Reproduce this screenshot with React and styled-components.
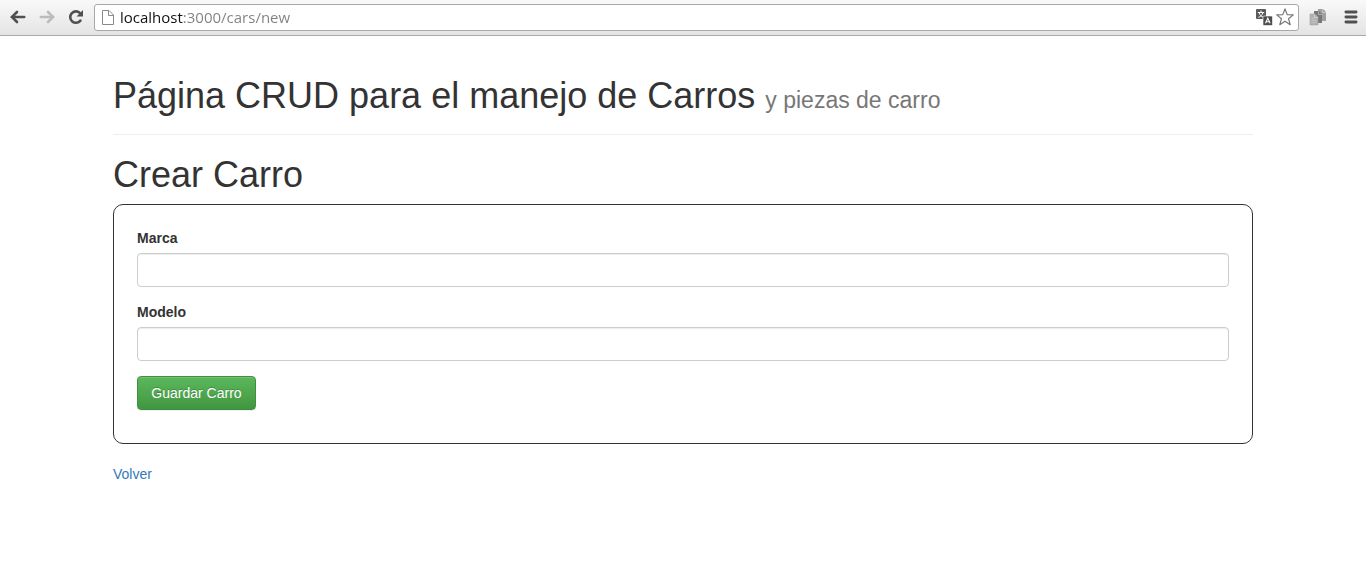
import React from "react";
import styled, { createGlobalStyle } from "styled-components";

const GlobalStyle = createGlobalStyle`
  *, *::before, *::after { box-sizing: border-box; }
  body {
    margin: 0;
    background: #fff;
    color: #333;
    font: 14px/20px "Liberation Sans", Arial, sans-serif;
  }
`;

const Toolbar = styled.header`
  display: flex;
  align-items: center;
  height: 36px;
  padding: 0 1px 1px 7px;
  background: linear-gradient(#f9f9f9, #e4e4e4);
  border-bottom: 1px solid #a9a9a9;
`;

const IconButton = styled.button`
  display: flex;
  align-items: center;
  justify-content: center;
  flex: none;
  width: ${(p) => p.$width || 29}px;
  height: 28px;
  padding: 0;
  border: 0;
  background: none;
  color: ${(p) => p.$color || "#505050"};

  svg { display: block; }
`;

const AddressBar = styled.form`
  display: flex;
  align-items: center;
  flex: 1;
  min-width: 0;
  height: 27px;
  margin-left: 7px;
  padding: 0 2px 0 7px;
  background: #fff;
  border: 1px solid #a8a8a8;
  border-radius: 3px;
  color: #888;
`;

/* The host part is dark, the path after it grey. */
const AddressInput = styled.input`
  flex: 1;
  min-width: 0;
  height: 24px;
  margin-left: 6px;
  padding: 0;
  border: 0;
  outline: 0;
  font: 15px/24px "Open Sans", "Noto Sans", sans-serif;
  color: #222;
  background: linear-gradient(to right, #111 63px, #808080 63px);
  background-clip: text;
  -webkit-text-fill-color: transparent;
`;

const Container = styled.main`
  max-width: 1170px;
  margin: 0 auto;
  padding: 0 15px;
`;

const PageHeader = styled.div`
  margin: 40px 0 20px;
  padding-bottom: 9px;
  border-bottom: 1px solid #eee;
`;

const Title = styled.h1`
  margin: 0 0 9px;
  font-size: 36px;
  font-weight: 500;
  line-height: 40px;

  small {
    font-size: 23px;
    font-weight: 400;
    line-height: 1;
    color: #777;
  }
`;

const CarForm = styled.form`
  margin-bottom: 20px;
  padding: 23px 23px 33px;
  border: 1px solid #333;
  border-radius: 10px;
`;

const Field = styled.div`
  margin-bottom: 15px;
`;

const Label = styled.label`
  display: block;
  margin-bottom: 5px;
  font-weight: 700;
`;

const TextInput = styled.input`
  display: block;
  width: 100%;
  height: 34px;
  padding: 6px 12px;
  border: 1px solid #ccc;
  border-radius: 4px;
  background: #fff;
  box-shadow: inset 0 1px 1px rgba(0, 0, 0, 0.075);
  color: #555;
  font: inherit;
`;

const SubmitButton = styled.button`
  display: block;
  min-width: 119px;
  padding: 6px 12px;
  border: 1px solid #3e8f3e;
  border-radius: 4px;
  background: linear-gradient(#5cb85c, #419641);
  box-shadow: inset 0 1px 0 rgba(255, 255, 255, 0.15), 0 1px 1px rgba(0, 0, 0, 0.075);
  color: #fff;
  font: inherit;
  text-shadow: 0 -1px 0 rgba(0, 0, 0, 0.2);
  cursor: pointer;
`;

const BackLink = styled.a`
  color: #337ab7;
  text-decoration: none;
`;

function ArrowIcon({ flip }) {
  return (
    <svg width="16" height="14" viewBox="0 0 16 14" fill="none" stroke="currentColor" strokeWidth="2.6" aria-hidden="true">
      <g transform={flip ? "translate(16 0) scale(-1 1)" : undefined}>
        <path d="M2 7H14.2" strokeLinecap="round" />
        <path d="M7 2L2 7l5 5" strokeLinecap="round" strokeLinejoin="miter" />
      </g>
    </svg>
  );
}

function ReloadIcon() {
  return (
    <svg width="16" height="16" viewBox="0 0 16 16" aria-hidden="true">
      <path d="M12.4 11.6A5.7 5.700 0 1 1 11.800 3.900" fill="none" stroke="currentColor" strokeWidth="2.600" strokeLinecap="round" />
      <path d="M15 1V7.500H8.500z" fill="currentColor" />
    </svg>
  );
}

function PageIcon() {
  return (
    <svg width="12" height="16" viewBox="0 0 12 16" fill="none" stroke="#8a8a8a" aria-hidden="true">
      <path d="M.5 1.500h6.500l4.500 4.500v9.500H.5z" fill="#fff" />
      <path d="M6.500 1.500V6.500h5" />
    </svg>
  );
}

function TranslateIcon() {
  return (
    <svg width="17" height="17" viewBox="0 0 17 17" fill="none" aria-hidden="true">
      <rect x="0" y="0" width="10" height="10" rx="1" fill="#5a5a5a" />
      <path d="M5 1.400v1.600M1.800 3.500h6.400M3.200 4c.6 2 2.200 3.600 4.400 4.400M6.800 4c-.6 2-2.200 3.600-4.400 4.400" stroke="#fff" strokeWidth="1" />
      <rect x="7" y="7" width="9.500" height="9.500" rx="1" fill="#4d4d4d" stroke="#fff" strokeWidth=".6" />
      <path d="M9.500 14.300l2.300-5.200 2.300 5.200M10.300 12.800h3" stroke="#fff" strokeWidth="1.100" />
    </svg>
  );
}

function StarIcon() {
  return (
    <svg width="18" height="18" viewBox="0 0 18 18" fill="#fff" stroke="#777" strokeWidth="1.200" strokeLinejoin="round" aria-hidden="true">
      <path d="M9 .9l2.200 5.700 6.100.3-4.800 3.800 1.700 6L9 13.300l-5.200 3.400 1.700-6L.7 6.900l6.100-.3z" />
    </svg>
  );
}

function PagesIcon() {
  return (
    <svg width="18" height="17" viewBox="0 0 18 17" aria-hidden="true">
      <path d="M9 0h5l3 3v9H9z" fill="#a0a0a0" />
      <path d="M13.500 .5v3H17" fill="none" stroke="#c8c8c8" />
      <path d="M5 2h5l3 3v9H5z" fill="#777" />
      <path d="M9.500 2.500v3H13" fill="none" stroke="#b0b0b0" />
      <path d="M1 5h5l3 3v8H1z" fill="#b2b2b2" stroke="#a2a2a2" strokeWidth=".6" />
      <path d="M2.500 9.500h3M2.500 11.500h5M2.500 13.500h5" stroke="#c2c2c2" />
      <path d="M5.500 5.500v3H9" fill="none" stroke="#cecece" />
    </svg>
  );
}

function MenuIcon() {
  return (
    <svg width="14" height="14" viewBox="0 0 14 14" stroke="currentColor" strokeWidth="2.800" strokeLinecap="round" aria-hidden="true">
      <path d="M1.900 2h10.200M1.900 7h10.200M1.900 12h10.200" />
    </svg>
  );
}

export default function App() {
  return (
    <>
      <GlobalStyle />
      <Toolbar>
        <IconButton $width={21} aria-label="Atrás"><ArrowIcon /></IconButton>
        <IconButton $width={37} $color="#bcbcbc" aria-label="Adelante"><ArrowIcon flip /></IconButton>
        <IconButton $width={22} aria-label="Recargar"><ReloadIcon /></IconButton>
        <AddressBar onSubmit={(e) => e.preventDefault()}>
          <PageIcon />
          <AddressInput aria-label="Dirección" defaultValue="localhost:3000/cars/new" spellCheck={false} />
          <IconButton type="button" $width={20} aria-label="Traducir"><TranslateIcon /></IconButton>
          <IconButton type="button" $width={22} aria-label="Favorito"><StarIcon /></IconButton>
        </AddressBar>
        <IconButton $width={37} aria-label="Extensión"><PagesIcon /></IconButton>
        <IconButton $width={29} aria-label="Menú"><MenuIcon /></IconButton>
      </Toolbar>
      <Container>
        <PageHeader>
          <Title>
            Página CRUD para el manejo de Carros <small>y piezas de carro</small>
          </Title>
        </PageHeader>
        <Title as="h2">Crear Carro</Title>
        <CarForm onSubmit={(e) => e.preventDefault()}>
          <Field>
            <Label htmlFor="marca">Marca</Label>
            <TextInput id="marca" type="text" />
          </Field>
          <Field>
            <Label htmlFor="modelo">Modelo</Label>
            <TextInput id="modelo" type="text" />
          </Field>
          <SubmitButton type="submit">Guardar Carro</SubmitButton>
        </CarForm>
        <BackLink href="#cars">Volver</BackLink>
      </Container>
    </>
  );
}
